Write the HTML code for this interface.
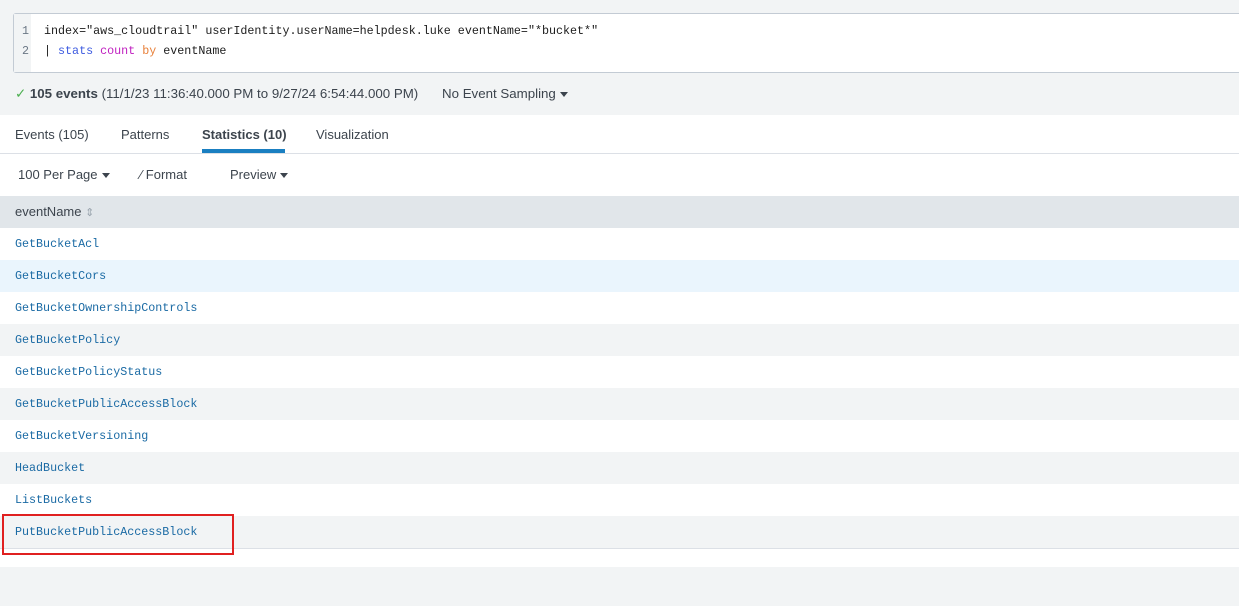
<!DOCTYPE html>
<html><head><style>
*{margin:0;padding:0;box-sizing:border-box}
body{width:1239px;height:606px;background:#fff;font-family:"Liberation Sans",sans-serif;position:relative;overflow:hidden;color:#3c444d}
.top{position:absolute;left:0;top:0;width:1239px;height:115px;background:#f2f4f5}
.ed{position:absolute;left:13px;top:13px;width:1240px;height:60px;background:#fff;border:1px solid #c3cbd4;border-radius:3px;font-family:"Liberation Mono",monospace;font-size:11.7px}
.gut{position:absolute;left:0;top:0;width:17px;height:58px;background:#f2f4f5;color:#6b7785}
.ln{position:absolute;height:20px;line-height:20px}
.status{position:absolute;left:15px;top:86px;font-size:13.3px;color:#3c444d;white-space:nowrap}
.tabs{position:absolute;left:0;top:115px;width:1239px;height:39px;border-bottom:1px solid #dce0e6;font-size:13px}
.tab{position:absolute;top:12px;color:#3c444d}
.tb{position:absolute;top:167px;font-size:13px;color:#3c444d}
.hdr{position:absolute;left:0;top:196px;width:1239px;height:32px;background:#e1e6ea;font-size:13px;line-height:32px;padding-left:15px;color:#3c444d}
.row{position:absolute;left:0;width:1239px;height:32px;line-height:32px;padding-left:15px;font-family:"Liberation Mono",monospace;font-size:11.7px;color:#1a6aa4}
.g{background:#f2f4f5}.b{background:#eaf5fd}
.caret{display:inline-block;width:0;height:0;border-left:4px solid transparent;border-right:4px solid transparent;border-top:5px solid #3c444d;vertical-align:middle;margin-left:4px}
</style></head><body>
<div class="top"></div>
<div class="ed">
<div class="gut"></div>
<div class="ln" style="left:8px;top:7px;color:#6b7785">1</div>
<div class="ln" style="left:8px;top:27px;color:#6b7785">2</div>
<div class="ln" style="left:30px;top:7px;color:#1c1c1c">index="aws_cloudtrail" userIdentity.userName=helpdesk.luke eventName="*bucket*"</div>
<div class="ln" style="left:30px;top:27px;color:#1c1c1c">| <span style="color:#3d5be0">stats</span> <span style="color:#c020c0">count</span> <span style="color:#e8803a">by</span> eventName</div>
</div>
<div class="status"><span style="color:#4caf50">✓</span> <b>105 events</b> (11/1/23 11:36:40.000 PM to 9/27/24 6:54:44.000 PM)</div>
<div class="status" style="left:442px">No Event Sampling<span class="caret"></span></div>
<div class="tabs">
<div class="tab" style="left:15px">Events (105)</div>
<div class="tab" style="left:121px">Patterns</div>
<div class="tab" style="left:202px;font-weight:bold;color:#3c444d">Statistics (10)</div>
<div style="position:absolute;left:202px;top:34px;width:83px;height:4px;background:#1a7fc1"></div>
<div class="tab" style="left:316px">Visualization</div>
</div>
<div class="tb" style="left:18px">100 Per Page<span class="caret"></span></div>
<div class="tb" style="left:140px">⁄ Format</div>
<div class="tb" style="left:230px">Preview<span class="caret"></span></div>
<div class="hdr">eventName <span style="color:#9aa4ae;font-size:11px">⇕</span></div>
<div class="row" style="top:228px">GetBucketAcl</div>
<div class="row b" style="top:260px">GetBucketCors</div>
<div class="row" style="top:292px">GetBucketOwnershipControls</div>
<div class="row g" style="top:324px">GetBucketPolicy</div>
<div class="row" style="top:356px">GetBucketPolicyStatus</div>
<div class="row g" style="top:388px">GetBucketPublicAccessBlock</div>
<div class="row" style="top:420px">GetBucketVersioning</div>
<div class="row g" style="top:452px">HeadBucket</div>
<div class="row" style="top:484px">ListBuckets</div>
<div class="row g" style="top:516px;border-bottom:1px solid #dce0e6;height:33px">PutBucketPublicAccessBlock</div>
<div style="position:absolute;left:0;top:567px;width:1239px;height:39px;background:#f2f4f5"></div>
<div style="position:absolute;left:2px;top:514px;width:232px;height:41px;border:2px solid #e02020"></div>
</body></html>
